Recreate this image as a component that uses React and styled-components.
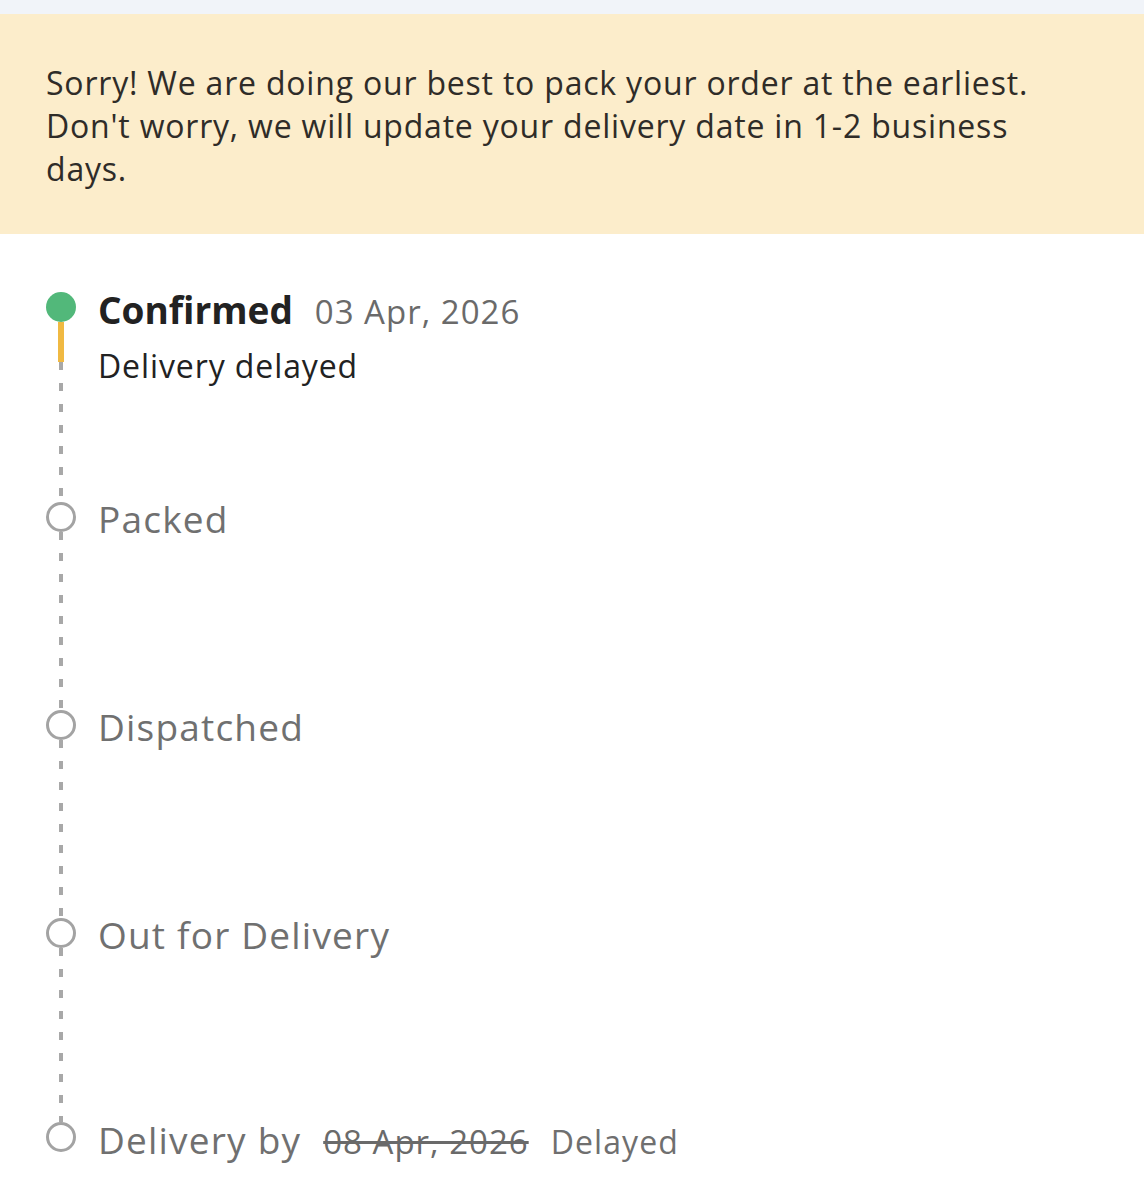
import React from "react"
import styled, { createGlobalStyle } from "styled-components"

const GlobalStyle = createGlobalStyle`
  body {
    margin: 0;
    background: #ffffff;
    font-family: "Open Sans", "Noto Sans", sans-serif;
  }
`

const Page = styled.div`
  width: 1144px;
  min-height: 1200px;
  background: #ffffff;
`

const TopStrip = styled.div`
  height: 14px;
  background: #f1f4f9;
`

const Banner = styled.div`
  background: #fcedcb;
  padding: 47px 46px 44px;
  font-size: 32px;
  line-height: 43px;
  letter-spacing: 0.8px;
  color: #2f2c28;
`

const Timeline = styled.div`
  padding: 58px 46px 0;
`

const Step = styled.div`
  display: flex;
  gap: 22px;
  min-height: ${(p) => p.$height}px;
`

const Rail = styled.div`
  width: 30px;
  display: flex;
  flex-direction: column;
  align-items: center;
  flex-shrink: 0;
`

const Dot = styled.div`
  width: 30px;
  height: 30px;
  border-radius: 50%;
  box-sizing: border-box;
  background: ${(p) => (p.$done ? "#52b87a" : "#ffffff")};
  border: ${(p) => (p.$done ? "none" : "3px solid #a3a3a3")};
  flex-shrink: 0;
`

const SolidLine = styled.div`
  width: 6px;
  height: 40px;
  background: #f0b942;
`

const DashedLine = styled.div`
  width: 4px;
  flex: 1;
  background: repeating-linear-gradient(
    to bottom,
    #a8a8a8 0,
    #a8a8a8 8px,
    transparent 8px,
    transparent 21px
  );
`

const Content = styled.div`
  display: flex;
  flex-direction: column;
  gap: 12px;
  margin-top: -3px;
`

const TitleRow = styled.div`
  display: flex;
  align-items: baseline;
  gap: 22px;
`

const Title = styled.span`
  font-size: 37px;
  line-height: 40px;
  font-weight: ${(p) => (p.$done ? 700 : 400)};
  color: ${(p) => (p.$done ? "#222222" : "#707070")};
  letter-spacing: ${(p) => (p.$done ? "0" : "1.2px")};
`

const DateText = styled.span`
  font-size: 33px;
  letter-spacing: 1px;
  color: #6a6a6a;
  text-decoration: ${(p) => (p.$struck ? "line-through" : "none")};
`

const Note = styled.span`
  font-size: 32px;
  letter-spacing: 1.1px;
  color: #6f6f6f;
`

const SubText = styled.div`
  font-size: 32px;
  line-height: 40px;
  letter-spacing: 0.9px;
  color: #222222;
`

const steps = [
  { title: "Packed", height: 208 },
  { title: "Dispatched", height: 208 },
  { title: "Out for Delivery", height: 204 },
]

const App = () => {
  return (
    <Page>
      <GlobalStyle />
      <TopStrip />
      <Banner>
        Sorry! We are doing our best to pack your order at the earliest. Don't
        worry, we will update your delivery date in 1-2 business days.
      </Banner>
      <Timeline>
        <Step $height={210}>
          <Rail>
            <Dot $done />
            <SolidLine />
            <DashedLine />
          </Rail>
          <Content>
            <TitleRow>
              <Title $done>Confirmed</Title>
              <DateText>03 Apr, 2026</DateText>
            </TitleRow>
            <SubText>Delivery delayed</SubText>
          </Content>
        </Step>
        {steps.map((s) => (
          <Step key={s.title} $height={s.height}>
            <Rail>
              <Dot />
              <DashedLine />
            </Rail>
            <Content>
              <TitleRow>
                <Title>{s.title}</Title>
              </TitleRow>
            </Content>
          </Step>
        ))}
        <Step $height={40}>
          <Rail>
            <Dot />
          </Rail>
          <Content>
            <TitleRow>
              <Title>Delivery by</Title>
              <DateText $struck>08 Apr, 2026</DateText>
              <Note>Delayed</Note>
            </TitleRow>
          </Content>
        </Step>
      </Timeline>
    </Page>
  )
}

export default App
